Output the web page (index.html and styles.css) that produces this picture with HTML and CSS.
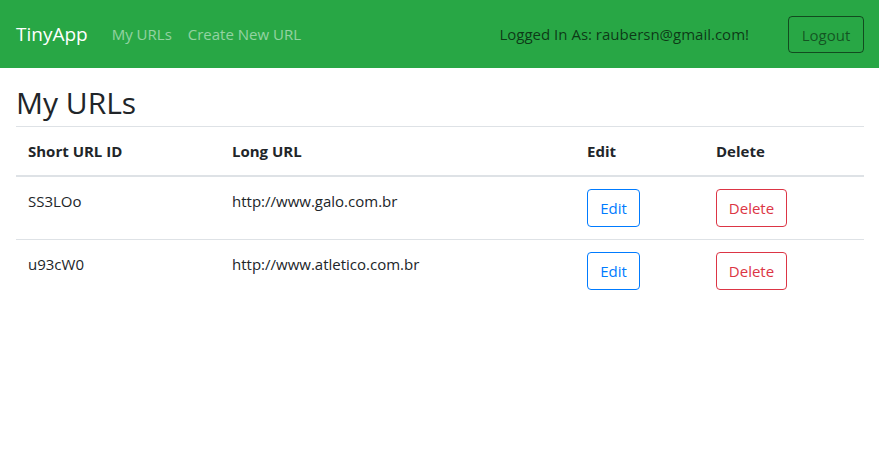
FILE: index.html
```html
<!DOCTYPE html>
<html lang="en">
<head>
<meta charset="utf-8">
<title>TinyApp</title>
<link rel="stylesheet" href="styles.css">
</head>
<body>
<nav class="navbar">
  <a class="brand" href="#">TinyApp</a>
  <ul class="nav-links">
    <li><a href="#">My URLs</a></li>
    <li><a href="#">Create New URL</a></li>
  </ul>
  <div class="nav-right">
    <span class="nav-text">Logged In As: raubersn@gmail.com!</span>
    <button class="btn btn-logout" type="button">Logout</button>
  </div>
</nav>
<main class="container">
  <h2 class="title">My URLs</h2>
  <table class="table">
    <thead>
      <tr>
        <th class="c-short">Short URL ID</th>
        <th class="c-long">Long URL</th>
        <th class="c-edit">Edit</th>
        <th class="c-del">Delete</th>
      </tr>
    </thead>
    <tbody>
      <tr>
        <td>SS3LOo</td>
        <td>http://www.galo.com.br</td>
        <td><button class="btn btn-edit" type="button">Edit</button></td>
        <td><button class="btn btn-delete" type="button">Delete</button></td>
      </tr>
      <tr>
        <td>u93cW0</td>
        <td>http://www.atletico.com.br</td>
        <td><button class="btn btn-edit" type="button">Edit</button></td>
        <td><button class="btn btn-delete" type="button">Delete</button></td>
      </tr>
    </tbody>
  </table>
</main>
</body>
</html>
```
FILE: styles.css
```css
* { box-sizing: border-box; }
html, body { margin: 0; padding: 0; }
body {
  font-family: "Open Sans", "Noto Sans", "Liberation Sans", sans-serif;
  font-size: 15px;
  line-height: 24px;
  color: #212529;
  background: #fff;
}
.navbar {
  display: flex;
  align-items: center;
  height: 68px;
  padding: 0 15px 0 16px;
  background: #28a745;
}
.brand {
  font-size: 19px;
  line-height: 30px;
  color: #fff;
  text-decoration: none;
  margin-right: 16px;
}
.nav-links {
  display: flex;
  list-style: none;
  margin: 0;
  padding: 0;
}
.nav-links a {
  display: block;
  padding: 8px;
  color: rgba(255, 255, 255, 0.5);
  text-decoration: none;
}
.nav-right {
  margin-left: auto;
  display: flex;
  align-items: center;
}
.nav-text {
  color: rgba(0, 0, 0, 0.68);
  margin-right: 39px;
}
.btn {
  font-family: inherit;
  font-size: 15px;
  line-height: 24px;
  height: 38px;
  padding: 6px 12px;
  background: transparent;
  border: 1px solid;
  border-radius: 4px;
  cursor: pointer;
}
.btn-logout {
  color: rgba(0, 0, 0, 0.5);
  border-color: rgba(0, 0, 0, 0.55);
  width: 76px;
  height: 37px;
}
.btn-edit {
  color: #007bff;
  border-color: #007bff;
  width: 53px;
  padding: 6px 0;
}
.btn-delete {
  color: #dc3545;
  border-color: #dc3545;
  width: 71px;
  padding: 6px 0;
}
.container {
  padding: 0 15px 0 16px;
}
.title {
  font-size: 30px;
  font-weight: 500;
  line-height: 38px;
  margin: 16px 0 4px;
}
.table {
  width: 100%;
  border-collapse: collapse;
}
.table th, .table td {
  text-align: left;
  vertical-align: top;
  padding: 12px;
  border-top: 1px solid #dee2e6;
}
.table th {
  font-weight: 700;
  border-bottom: 2px solid #dee2e6;
}
.c-short { width: 204px; }
.c-long { width: 355px; }
.c-edit { width: 129px; }
```
